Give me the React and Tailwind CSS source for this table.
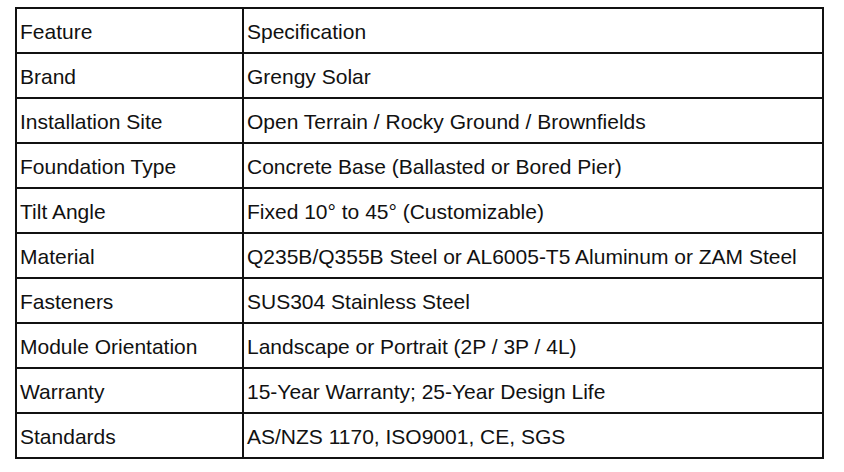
export default function App() {
  const rows = [
    ["Feature", "Specification"],
    ["Brand", "Grengy Solar"],
    ["Installation Site", "Open Terrain / Rocky Ground / Brownfields"],
    ["Foundation Type", "Concrete Base (Ballasted or Bored Pier)"],
    ["Tilt Angle", "Fixed 10° to 45° (Customizable)"],
    ["Material", "Q235B/Q355B Steel or AL6005-T5 Aluminum or ZAM Steel"],
    ["Fasteners", "SUS304 Stainless Steel"],
    ["Module Orientation", "Landscape or Portrait (2P / 3P / 4L)"],
    ["Warranty", "15-Year Warranty; 25-Year Design Life"],
    ["Standards", "AS/NZS 1170, ISO9001, CE, SGS"],
  ];
  return (
    <div className="w-[844px] h-[472px] bg-white pt-[7px] pl-[15px]" style={{ fontFamily: '"Liberation Sans", Arial, sans-serif' }}>
      <table className="border-collapse text-[21px] text-[#111]">
        <tbody>
          {rows.map(([a, b]) => (
            <tr key={a} className="h-[45px]">
              <td className="w-[227px] border-2 border-[#111] pl-[3px] pt-[2px] align-middle leading-none">{a}</td>
              <td className="w-[580px] border-2 border-[#111] pl-[3px] pt-[2px] align-middle leading-none">{b}</td>
            </tr>
          ))}
        </tbody>
      </table>
    </div>
  );
}
